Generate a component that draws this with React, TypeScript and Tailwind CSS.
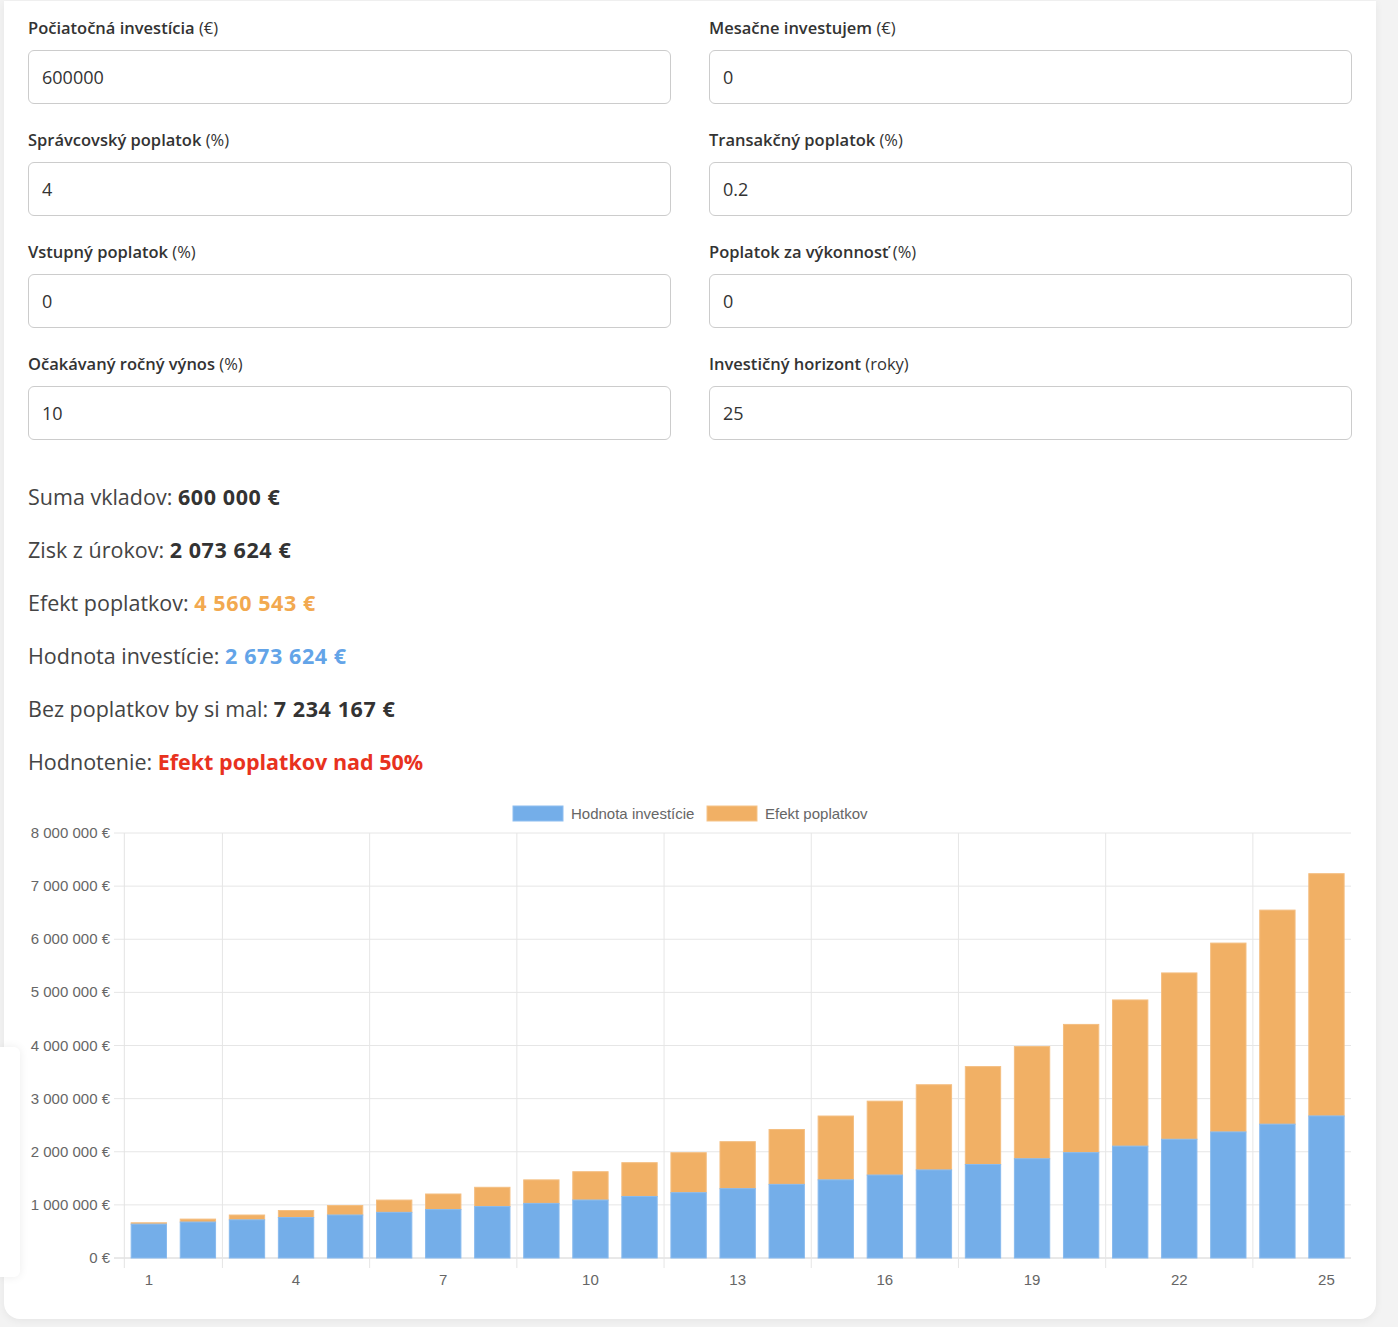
import React from 'react';

const fields = [
  { label: 'Počiatočná investícia', unit: '(€)', value: '600000' },
  { label: 'Mesačne investujem', unit: '(€)', value: '0' },
  { label: 'Správcovský poplatok', unit: '(%)', value: '4' },
  { label: 'Transakčný poplatok', unit: '(%)', value: '0.2' },
  { label: 'Vstupný poplatok', unit: '(%)', value: '0' },
  { label: 'Poplatok za výkonnosť', unit: '(%)', value: '0' },
  { label: 'Očakávaný ročný výnos', unit: '(%)', value: '10' },
  { label: 'Investičný horizont', unit: '(roky)', value: '25' },
];

const YEARS = 25;
const start = 600000;
const feeGrowth = Math.pow(2673624 / start, 1 / YEARS);
const freeGrowth = Math.pow(1 + 0.1 / 12, 12);

const data = Array.from({ length: YEARS }, (_, i) => {
  const n = i + 1;
  const value = start * Math.pow(feeGrowth, n);
  const total = start * Math.pow(freeGrowth, n);
  return { n, value, fee: total - value };
});

function formatEur(v: number) {
  return v.toLocaleString('en-US').replace(/,/g, ' ') + ' €';
}

function Chart() {
  const left = 96.3;
  const right = 1323;
  const top = 38;
  const bottom = 463;
  const cat = (right - left) / YEARS;
  const barW = cat * 0.72;
  const perM = (bottom - top) / 8;
  const y = (v: number) => bottom - (v / 1000000) * perM;
  const ticks = [0, 3, 6, 9, 12, 15, 18, 21, 24];
  const font = '"Liberation Sans", Arial, sans-serif';

  return (
    <svg width="1323" height="500" viewBox="0 0 1323 500" className="mt-[7px] block">
      {/* legend */}
      <rect x="485" y="11" width="50" height="15" fill="#74aee9" stroke="#8ebef0" strokeWidth="1" />
      <text x="543" y="23.5" fontSize="15" fill="#666" fontFamily={font}>Hodnota investície</text>
      <rect x="679" y="11" width="50" height="15" fill="#f1b065" stroke="#f5c489" strokeWidth="1" />
      <text x="737" y="23.5" fontSize="15" fill="#666" fontFamily={font}>Efekt poplatkov</text>

      {/* horizontal grid + y labels */}
      {Array.from({ length: 9 }, (_, i) => {
        const yy = y(i * 1000000);
        return (
          <g key={i}>
            <line x1="86" x2={right} y1={yy} y2={yy} stroke={i === 0 ? '#d2d2d2' : '#e6e6e6'} strokeWidth="1" />
            <text x="82" y={yy + 5} fontSize="15" fill="#666" textAnchor="end" fontFamily={font}>
              {formatEur(i * 1000000)}
            </text>
          </g>
        );
      })}

      {/* vertical grid */}
      <line x1={left} x2={left} y1={top} y2={473} stroke="#e3e3e3" strokeWidth="1" />
      {[2, 5, 8, 11, 14, 17, 20, 23].map((c) => (
        <line key={c} x1={left + c * cat} x2={left + c * cat} y1={top} y2={473} stroke="#e6e6e6" strokeWidth="1" />
      ))}

      {/* bars */}
      {data.map((d, i) => {
        const x = left + (i + 0.5) * cat - barW / 2;
        const yv = y(d.value);
        const yt = y(d.value + d.fee);
        return (
          <g key={d.n}>
            <rect x={x} y={yt} width={barW} height={yv - yt} fill="#f1b065" stroke="#f4be80" strokeWidth="1" />
            <rect x={x} y={yv} width={barW} height={bottom - yv} fill="#74aee9" stroke="#88baee" strokeWidth="1" />
          </g>
        );
      })}

      {/* x labels */}
      {ticks.map((t) => (
        <text key={t} x={left + (t + 0.5) * cat} y="490" fontSize="15" fill="#666" textAnchor="middle" fontFamily={font}>
          {t + 1}
        </text>
      ))}
    </svg>
  );
}

export default function App() {
  return (
    <div className="relative min-h-[1327px] w-[1398px] bg-[#f3f3f3] pt-[1px]" style={{ fontFamily: '"Open Sans", "Noto Sans", sans-serif' }}>
      <div className="ml-[4px] w-[1372px] rounded-b-[16px] bg-white px-[24px] pt-[16px] pb-[24px] shadow-[0_2px_8px_rgba(0,0,0,0.06)]">
        {/* Inputs */}
        <div className="grid grid-cols-2 gap-x-[38px] gap-y-[25px]">
          {fields.map((f) => (
            <div key={f.label}>
              <label className="block text-[16.5px] leading-[22px] font-semibold text-[#333]">
                {f.label} <span className="font-normal">{f.unit}</span>
              </label>
              <input
                readOnly
                value={f.value}
                className="mt-[11px] block h-[54px] w-full rounded-[6px] border border-[#cccccc] bg-white px-[13px] text-[18px] text-[#333] outline-none"
              />
            </div>
          ))}
        </div>

        {/* Results */}
        <div className="mt-[30px] text-[21.5px] leading-[53px] text-[#444]">
          <p>Suma vkladov: <b className="font-bold tracking-[0.6px] text-[#333]">600 000 €</b></p>
          <p>Zisk z úrokov: <b className="font-bold tracking-[0.6px] text-[#333]">2 073 624 €</b></p>
          <p>Efekt poplatkov: <b className="font-bold tracking-[0.6px] text-[#f2a950]">4 560 543 €</b></p>
          <p>Hodnota investície: <b className="font-bold tracking-[0.6px] text-[#63a4e8]">2 673 624 €</b></p>
          <p>Bez poplatkov by si mal: <b className="font-bold tracking-[0.6px] text-[#333]">7 234 167 €</b></p>
          <p>Hodnotenie: <b className="font-bold text-[#e8321e]">Efekt poplatkov nad 50%</b></p>
        </div>

        <Chart />
      </div>

      {/* floating side widget */}
      <div className="absolute left-0 top-[1047px] h-[230px] w-[20px] rounded-r-[6px] bg-white shadow-[0_0_10px_rgba(0,0,0,0.08)]" />
    </div>
  );
}
